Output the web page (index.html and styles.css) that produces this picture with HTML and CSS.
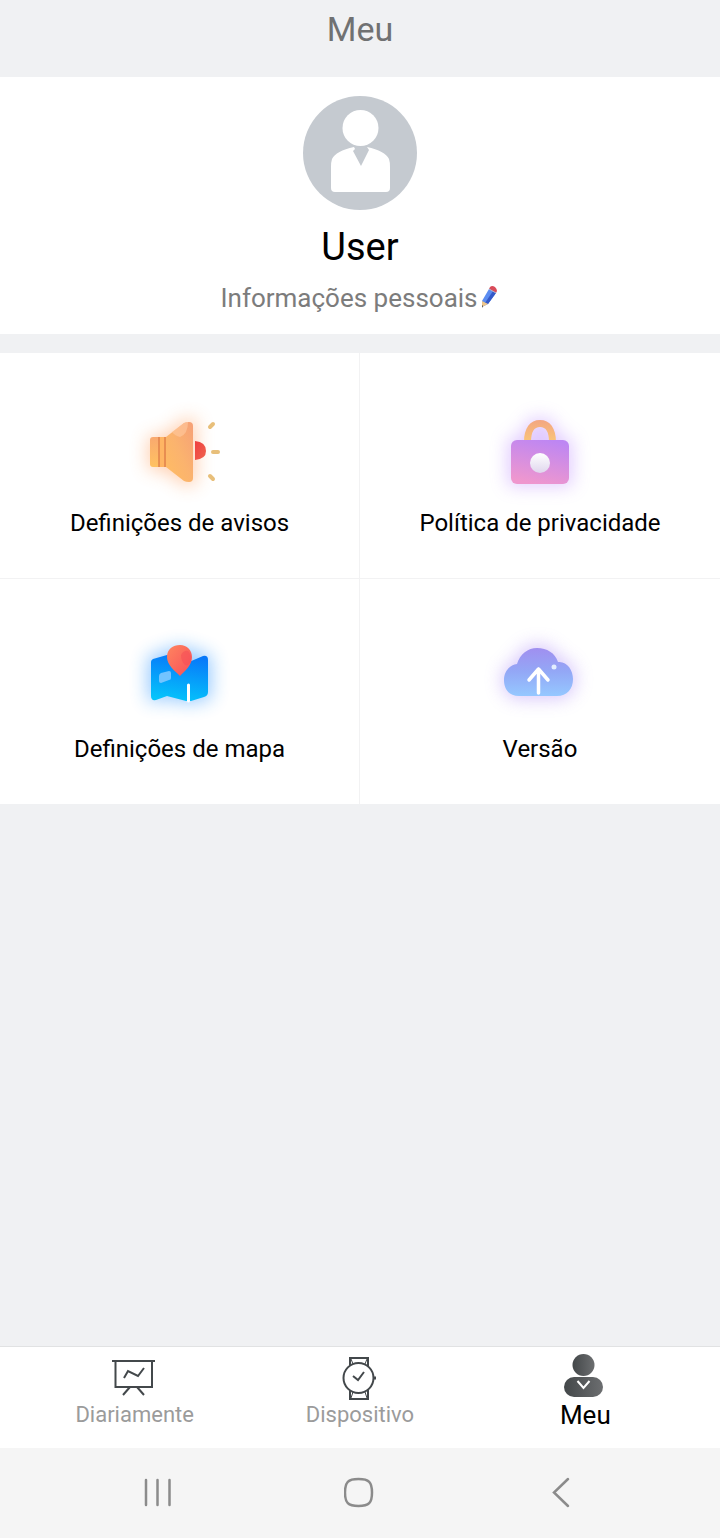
FILE: index.html
```html
<!DOCTYPE html>
<html lang="pt">
<head>
<meta charset="utf-8">
<meta name="viewport" content="width=device-width, initial-scale=1">
<title>Meu</title>
<link rel="stylesheet" href="styles.css">
</head>
<body>
<header class="topbar">
  <h1>Meu</h1>
</header>

<main>
  <section class="profile">
    <svg class="avatar" viewBox="0 0 114 114" aria-hidden="true">
      <circle cx="57" cy="57" r="57" fill="#c5cad0"/>
      <circle cx="57.5" cy="32" r="18" fill="#fff"/>
      <path d="M51 51 Q33 55 29 63 Q28 66 28 71 V92 Q28 96 32 96 H83 Q87 96 87 92 V71 Q87 66 86 63 Q82 55 64 51 L66 54 L58 70 L50 55 L52 53 Z" fill="#fff"/>
    </svg>
    <h2>User</h2>
    <a class="edit" href="#">Informações pessoais
      <svg class="pencil" viewBox="0 0 18 24" aria-hidden="true">
        <path d="M0 15 L7 3 L14 7 L6 18 L0 21 Z" fill="#5b8cf0"/>
        <path d="M3 17 L11 5 L14 7 L6 18 Z" fill="#3459c8"/>
        <path d="M0 15 L6 18 L0 21 Z" fill="#eec68c"/>
        <path d="M0 19 L1 20 L0 22 Z" fill="#444"/>
        <path d="M7 3 L8 1 Q10 -1 13 1 Q15 3 15 5 L14 7 Z" fill="#d94b59"/>
        <path d="M7 3 L14 7" stroke="#a9b5d1" stroke-width="1"/>
      </svg>
    </a>
  </section>

  <nav class="tiles">
    <a class="tile" href="#">
      <svg class="tile-icon" viewBox="0 0 120 100" aria-hidden="true">
        <defs>
          <filter id="glow" x="-60%" y="-60%" width="220%" height="220%" color-interpolation-filters="sRGB"><feGaussianBlur stdDeviation="9"/></filter>
          <linearGradient id="horn" x1="0" y1="1" x2="1" y2="0"><stop offset="0" stop-color="#ffbd62"/><stop offset=".5" stop-color="#fbb36e"/><stop offset="1" stop-color="#f6a077"/></linearGradient>
          <linearGradient id="hornEnd" x1="0" y1="0" x2="0" y2="1"><stop offset="0" stop-color="#f9a96f"/><stop offset="1" stop-color="#ffc260"/></linearGradient>
          <linearGradient id="redDot" x1="0" y1="0" x2="1" y2="1"><stop offset="0" stop-color="#ef3f3f"/><stop offset="1" stop-color="#ef6550"/></linearGradient>
        </defs>
        <path d="M28 36 H44 L64 19 H76 V85 H64 L44 70 H28 Z" fill="#ff9650" opacity=".45" filter="url(#glow)"/>
        <path d="M33 37 H39 V67 H33 Q30 67 30 64 V40 Q30 37 33 37 Z" fill="url(#hornEnd)"/>
        <path d="M39 37 H46 V67 H39 Z" fill="#ffb563"/>
        <path d="M39 37 V67 M45 37 V67" stroke="#dc7a48" stroke-width="1.3"/>
        <path d="M46 37 L64 23 Q66 22 69 22 Q73 22 73 26 V78 Q73 82 69 82 Q66 82 64 81 L46 67 Z" fill="url(#horn)"/>
        <path d="M52 32 L64 23 Q66 22 68 22 Q68 34 60 37 Q55 36 52 32 Z" fill="#ffcaa0" opacity=".6"/>
        <path d="M75 41 Q86 42 86 51 Q86 59 75 60 Z" fill="url(#redDot)"/>
        <path d="M90 27 L93 24 M93 52 H98 M90 76 L93 79" stroke="#e8bf7a" stroke-width="4" stroke-linecap="round"/>
      </svg>
      <span>Definições de avisos</span>
    </a>
    <a class="tile" href="#">
      <svg class="tile-icon" viewBox="0 0 120 100" aria-hidden="true">
        <defs>
          <linearGradient id="lockBody" x1=".7" y1="0" x2=".4" y2="1"><stop offset="0" stop-color="#bd86f3"/><stop offset="1" stop-color="#ef97ce"/></linearGradient>
          <linearGradient id="shackle" x1="0" y1="0" x2="0" y2="1"><stop offset="0" stop-color="#f3a681"/><stop offset="1" stop-color="#fac579"/></linearGradient>
          <linearGradient id="keyhole" x1="0" y1="0" x2="0" y2="1"><stop offset="0" stop-color="#fff"/><stop offset="1" stop-color="#dfd6ed"/></linearGradient>
        </defs>
        <path d="M28 38 H42 Q43 18 60 18 Q77 18 78 38 H92 V86 H28 Z" fill="#a868ff" opacity=".35" filter="url(#glow)"/>
        <path d="M44 42 C44 28 50 20 60 20 C70 20 76 28 76 42 H69 C69 32 66 27 60 27 C54 27 51 32 51 42 Z" fill="url(#shackle)"/>
        <rect x="31" y="40" width="58" height="44" rx="6" fill="url(#lockBody)"/>
        <circle cx="60" cy="63" r="10" fill="url(#keyhole)"/>
      </svg>
      <span>Política de privacidade</span>
    </a>
    <a class="tile" href="#">
      <svg class="tile-icon" viewBox="0 0 120 100" aria-hidden="true">
        <defs>
          <linearGradient id="mapFill" x1=".6" y1="0" x2=".4" y2="1"><stop offset="0" stop-color="#0878f9"/><stop offset="1" stop-color="#04c4fb"/></linearGradient>
          <linearGradient id="pinFill" x1="0" y1="0" x2="1" y2="1"><stop offset="0" stop-color="#ff855f"/><stop offset="1" stop-color="#f74f5a"/></linearGradient>
        </defs>
        <path d="M28 31 L60 20 L91 30 V73 L70 77 L45 73 L28 76 Z" fill="#1b8cff" opacity=".45" filter="url(#glow)"/>
        <path d="M31 36 Q31 34 33 33 L47 29 L69 36 L83 30 Q88 29 88 34 V66 Q88 70 84 71 L71 75 H66 L47 70 L36 74 Q31 75 31 70 Z" fill="url(#mapFill)"/>
        <path d="M39 50 Q39 48 41 47 L49 45 Q51 45 51 47 V52 Q51 54 49 54 L41 57 Q39 57 39 55 Z" fill="#7fc8ff" opacity=".9"/>
        <path d="M68.5 59 V75" stroke="#fff" stroke-width="3" stroke-linecap="round"/>
        <path d="M60 50 C55 45 47 39 47 31 C47 23 53 19 60 19 C67 19 72 24 72 31 C72 39 65 45 60 50 Z" fill="url(#pinFill)"/>
        <path d="M61 29 Q64 24 68 25 Q72 29 71 35 Q69 40 65 39 Q61 35 61 29 Z" fill="#f54b55" opacity=".5"/>
      </svg>
      <span>Definições de mapa</span>
    </a>
    <a class="tile" href="#">
      <svg class="tile-icon" viewBox="0 0 120 100" aria-hidden="true">
        <defs>
          <linearGradient id="cloudFill" x1="0" y1="0" x2="0" y2="1"><stop offset="0" stop-color="#a08ff0"/><stop offset=".5" stop-color="#93a8f6"/><stop offset="1" stop-color="#95c8ff"/></linearGradient>
        </defs>
        <path d="M39 73 C17 73 17 37 35 37 C40 13 74 13 79 33 C101 33 102 73 78 73 Z" fill="#9a70f5" opacity=".38" filter="url(#glow)"/>
        <path d="M39 70 C28 70 24 62 24 54 C24 45 30 39 37 38 C40 28 48 22 57 22 C67 22 75 27 78 36 C87 35 93 44 93 53 C93 63 87 70 77 70 Z" fill="url(#cloudFill)"/>
        <path d="M58.5 67 V43 M49 54 L58.5 43 L68 54" stroke="#fff" stroke-width="3.5" stroke-linecap="round" stroke-linejoin="round" fill="none"/>
        <circle cx="74" cy="41" r="2.5" fill="#e3eeff"/>
      </svg>
      <span>Versão</span>
    </a>
  </nav>
</main>

<nav class="tabs">
  <a class="tab" href="#">
    <svg class="tab-icon" viewBox="0 0 48 48" fill="none" stroke="#43484b" stroke-width="2" aria-hidden="true">
      <path d="M1 8 H44 M4.5 8 V34 H41 V8"/>
      <path d="M19 34 L12 42 M26 34 L33 42"/>
      <path d="M13 25 L17 18 L27 23 L33 15"/>
    </svg>
    <span>Diariamente</span>
  </a>
  <a class="tab" href="#">
    <svg class="tab-icon" viewBox="0 0 48 48" fill="none" stroke="#43484b" stroke-width="2" aria-hidden="true">
      <circle cx="22.5" cy="25" r="15"/>
      <path d="M14 13 V5 H32 V13 M14 37 V46 H32 V37"/>
      <path d="M15 6 L17 11 M31 6 L29 11 M17 39 L15 45 M29 39 L31 45" stroke-width="1"/>
      <path d="M17 23 L22 27 L28 19"/>
      <path d="M38 25 H40" stroke-width="3"/>
    </svg>
    <span>Dispositivo</span>
  </a>
  <a class="tab active" href="#">
    <svg class="tab-icon" viewBox="0 0 48 48" aria-hidden="true">
      <defs>
        <linearGradient id="person" x1="0" y1="0" x2="1" y2="0"><stop offset="0" stop-color="#434749"/><stop offset="1" stop-color="#6c6e70"/></linearGradient>
      </defs>
      <circle cx="22.5" cy="12" r="11" fill="url(#person)"/>
      <rect x="3" y="24" width="39" height="20" rx="10" fill="url(#person)"/>
      <path d="M16.5 28 L22.5 35 L28.5 28" fill="none" stroke="#fff" stroke-width="2"/>
    </svg>
    <span>Meu</span>
  </a>
</nav>

<footer class="sysbar">
  <button class="sys" aria-label="Recentes">
    <svg viewBox="0 0 32 32" stroke-width="2.5" aria-hidden="true"><path d="M3 3 V28 M14.5 3 V28 M26.5 3 V28"/></svg>
  </button>
  <button class="sys" aria-label="Início">
    <svg viewBox="0 0 32 32" stroke-width="2.5" aria-hidden="true"><path d="M14.5 2 C25 2 28 5 28 15.5 C28 26 25 29 14.5 29 C4 29 1 26 1 15.5 C1 5 4 2 14.5 2 Z"/></svg>
  </button>
  <button class="sys" aria-label="Voltar">
    <svg viewBox="0 0 32 32" stroke-width="2.5" aria-hidden="true"><path d="M23 2 L9 15.5 L23 29"/></svg>
  </button>
</footer>
</body>
</html>
```
FILE: styles.css
```css
* {
  box-sizing: border-box;
}
body {
  margin: 0;
  min-height: 100vh;
  display: flex;
  flex-direction: column;
  background: #f0f1f3;
  color: #000;
  font-family: Roboto, "Noto Sans", sans-serif;
}
a {
  color: inherit;
  text-decoration: none;
}
svg {
  display: block;
}
h1, h2 {
  margin: 0;
  font-weight: 400;
}
main {
  flex: 1;
}

.topbar {
  padding: 9px 0 28px;
  text-align: center;
}
.topbar h1 {
  font-size: 34px;
  line-height: 40px;
  color: #707172;
}

.profile {
  display: flex;
  flex-direction: column;
  align-items: center;
  padding: 19px 0 18px;
  background: #fff;
}
.avatar {
  width: 114px;
  height: 114px;
}
.profile h2 {
  margin-top: 13px;
  font-size: 38px;
  line-height: 48px;
}
.edit {
  display: flex;
  align-items: center;
  gap: 4px;
  margin-top: 9px;
  font-size: 26px;
  line-height: 36px;
  color: #7c7c7c;
}
.pencil {
  width: 18px;
  height: 24px;
  overflow: visible;
}

.tiles {
  display: grid;
  grid-template-columns: 1fr 1fr;
  margin-top: 19px;
  background: #fff;
}
.tile {
  display: flex;
  flex-direction: column;
  align-items: center;
  padding: 47px 0 41px;
  font-size: 24px;
  line-height: 28px;
}
.tile:nth-child(odd) {
  border-right: 1px solid #f2f2f3;
}
.tile:nth-child(-n+2) {
  border-bottom: 1px solid #f2f2f3;
}
.tile-icon {
  width: 120px;
  height: 100px;
  margin-bottom: 9px;
  overflow: visible;
}

.tabs {
  display: grid;
  grid-template-columns: repeat(3, 1fr);
  padding: 6px 22px 19px;
  border-top: 1px solid #e1e2e3;
  background: #fff;
}
.tab {
  display: flex;
  flex-direction: column;
  align-items: center;
  font-size: 22px;
  line-height: 28px;
  color: #9b9b9b;
}
.tab-icon {
  width: 48px;
  height: 48px;
}
.tab.active {
  font-size: 26px;
  color: #000;
}

.sysbar {
  display: grid;
  grid-template-columns: repeat(3, 1fr);
  justify-items: center;
  align-items: center;
  height: 90px;
  padding: 0 58px;
  background: #f5f5f5;
}
.sys {
  padding: 0;
  border: 0;
  background: none;
}
.sys svg {
  width: 32px;
  height: 32px;
  fill: none;
  stroke: #8b8b8b;
  stroke-linecap: round;
}
```
